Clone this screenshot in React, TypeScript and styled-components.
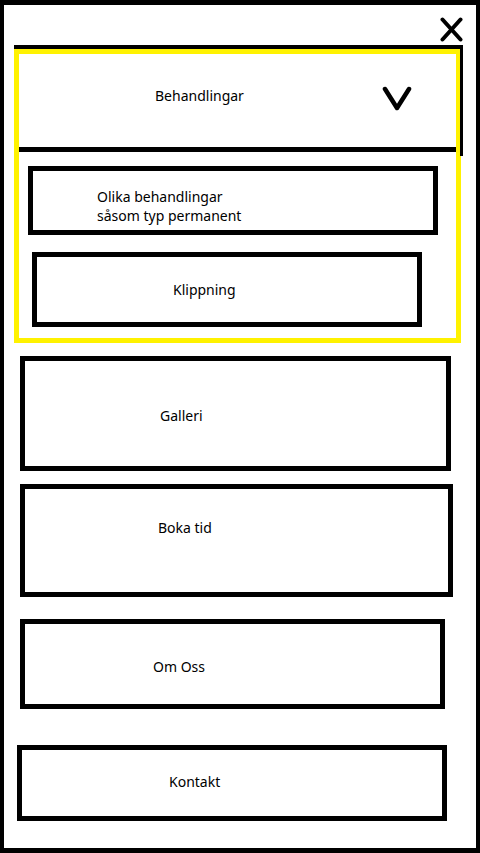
import React from "react";
import styled, { createGlobalStyle } from "styled-components";

const Global = createGlobalStyle`
  html, body { margin: 0; padding: 0; background: #fff; }
  body { font-family: "Noto Sans", "Open Sans", Arial, sans-serif; color: #000; }
  * { box-sizing: border-box; }
`;

const Frame = styled.div`
  width: 480px;
  height: 853px;
  border-style: solid;
  border-color: #000;
  border-width: 5px 4px 5px 4px;
  display: flex;
  flex-direction: column;
  background: #fff;
`;

const TopBar = styled.div`
  height: 44px;
  display: flex;
  justify-content: flex-end;
  align-items: flex-start;
  padding: 12px 13px 0 0;
`;

const CloseButton = styled.button`
  border: 0;
  background: none;
  padding: 0;
  width: 23px;
  height: 25px;
  display: block;
  cursor: pointer;
`;

const Section = styled.div`
  position: relative;
  margin-left: 10px;
  width: 447px;
  border: 5px solid #fff200;
  padding-bottom: 11px;

  &::before {
    content: "";
    position: absolute;
    top: -9px;
    left: -5px;
    right: -7px;
    height: 107px;
    border-top: 4px solid #000;
    border-right: 3px solid #000;
    pointer-events: none;
  }
`;

const Header = styled.div`
  height: 98px;
  border-bottom: 5px solid #000;
  display: flex;
  align-items: center;
  padding: 0 44px 11px 136px;
`;

const Label = styled.span`
  font-size: 14px;
  line-height: 19px;
  white-space: nowrap;
`;

const Chevron = styled.svg`
  margin-left: auto;
  margin-top: 7px;
  display: block;
`;

const Box = styled.div<{ $ml: number; $w: number; $h: number; $mt: number; $pl: number; $pt?: number; $pb?: number }>`
  margin-left: ${(p) => p.$ml}px;
  margin-top: ${(p) => p.$mt}px;
  width: ${(p) => p.$w}px;
  height: ${(p) => p.$h}px;
  border: 5px solid #000;
  display: flex;
  align-items: center;
  padding: ${(p) => p.$pt ?? 0}px 0 ${(p) => p.$pb ?? 0}px ${(p) => p.$pl}px;
`;

const SubText = styled.div`
  font-size: 14px;
  line-height: 19px;
  align-self: flex-start;
  padding-top: 16px;
`;

export default function App() {
  return (
    <>
      <Global />
      <Frame>
        <TopBar>
          <CloseButton aria-label="Stäng">
            <svg width="23" height="25" viewBox="0 0 23 25">
              <path d="M2.5 2.5 L20.5 22.5 M20.5 2.5 L2.5 22.5" stroke="#000" strokeWidth="4" strokeLinecap="round" />
            </svg>
          </CloseButton>
        </TopBar>
        <Section>
          <Header>
            <Label>Behandlingar</Label>
            <Chevron width="30" height="25" viewBox="0 0 30 25">
              <polyline points="3,3 15,22 27,3" fill="none" stroke="#000" strokeWidth="4.5" strokeLinecap="round" strokeLinejoin="round" />
            </Chevron>
          </Header>
          <Box $ml={9} $mt={14} $w={410} $h={69} $pl={64}>
            <SubText>
              Olika behandlingar
              <br />
              såsom typ permanent
            </SubText>
          </Box>
          <Box $ml={13} $mt={17} $w={390} $h={75} $pl={136}>
            <Label>Klippning</Label>
          </Box>
        </Section>
        <Box $ml={16} $mt={13} $w={431} $h={115} $pl={135} $pt={3}>
          <Label>Galleri</Label>
        </Box>
        <Box $ml={16} $mt={13} $w={433} $h={113} $pl={133} $pb={27}>
          <Label>Boka tid</Label>
        </Box>
        <Box $ml={16} $mt={22} $w={425} $h={90} $pl={128} $pt={4}>
          <Label>Om Oss</Label>
        </Box>
        <Box $ml={13} $mt={36} $w={430} $h={76} $pl={147} $pb={4}>
          <Label>Kontakt</Label>
        </Box>
      </Frame>
    </>
  );
}
